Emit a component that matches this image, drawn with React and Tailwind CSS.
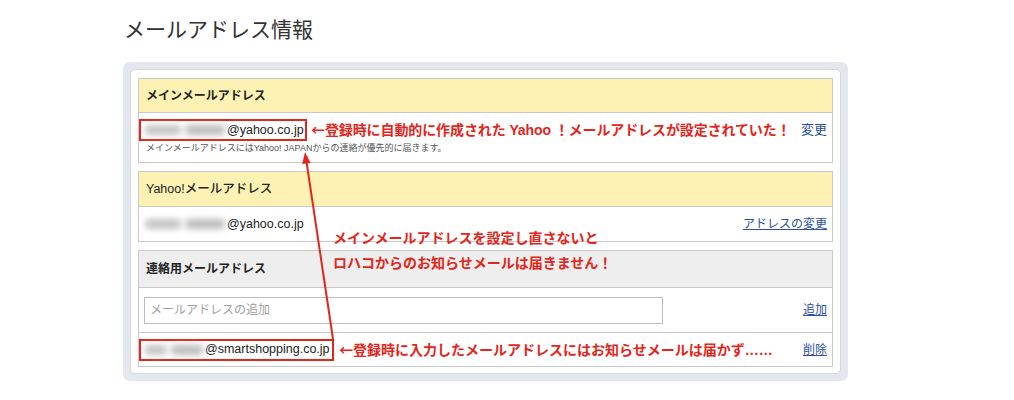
export default function App() {
  const font = { fontFamily: '"Liberation Sans", "Noto Sans CJK JP", sans-serif' };
  const cjk = { fontFamily: '"Noto Sans CJK JP", sans-serif' };
  const Blur = ({ w1 = 36, w2 = 40 }) => (
    <span className="inline-flex items-center gap-[4px] mr-[2px]">
      <span className="inline-block h-[10px] bg-[#c4c4c4] blur-[3px] rounded-sm" style={{ width: w1 }} />
      <span className="inline-block h-[10px] bg-[#bdbdbd] blur-[3px] rounded-sm" style={{ width: w2 }} />
    </span>
  );
  return (
    <div className="relative w-[1014px] h-[400px] bg-white overflow-hidden text-[#222]" style={font}>
      <div className="pt-[15px] pl-[124px] text-[21px] leading-[30px] text-[#333]">メールアドレス情報</div>

      <div className="mt-[17px] ml-[123px] w-[725px] rounded-[7px] bg-[#e4e7ed] p-[7px]">
        <div className="bg-white rounded-[5px] border border-[#d5d8dd] px-[7px] pt-[8px] pb-[6px]">
          {/* Section 1 */}
          <div className="border border-[#c9c9c9]">
            <div className="h-[34px] bg-[#fdf2b4] border-b border-[#c9c9c9] flex items-center pl-[7px] text-[12px] font-bold">
              メインメールアドレス
            </div>
            <div className="h-[49px] pt-[6px]">
              <div className="flex items-center h-[22px]">
                <div className="h-[22px] w-[168px] border-2 border-[#e3261b] flex items-center pl-[4px] text-[12.5px]">
                  <Blur />
                  <span>@yahoo.co.jp</span>
                </div>
                <span className="ml-[4px] text-[14px] font-bold text-[#e3261b] whitespace-nowrap tracking-[-0.1px]">
                  <span style={cjk}>←</span>登録時に自動的に作成された Yahoo ！メールアドレスが設定されていた！
                </span>
                <span className="ml-auto mr-[5px] text-[13px] text-[#2b4fa6] whitespace-nowrap">変更</span>
              </div>
              <div className="pl-[7px] text-[9px] leading-[12px] mt-[1px] text-[#555]">
                メインメールアドレスにはYahoo! JAPANからの連絡が優先的に届きます。
              </div>
            </div>
          </div>

          {/* Section 2 */}
          <div className="mt-[8px] border border-[#c9c9c9]">
            <div className="h-[35px] bg-[#fdf2b4] border-b border-[#c9c9c9] flex items-center pl-[7px] text-[12.5px] font-medium">
              Yahoo!メールアドレス
            </div>
            <div className="h-[34px] flex items-center pl-[6px] text-[12.5px]">
              <Blur />
              <span>@yahoo.co.jp</span>
              <span className="ml-auto mr-[5px] text-[12px] text-[#2b4fa6] underline">アドレスの変更</span>
            </div>
          </div>

          {/* Section 3 */}
          <div className="mt-[8px] border border-[#c9c9c9]">
            <div className="h-[37px] bg-[#eeeeee] border-b border-[#c9c9c9] flex items-center pl-[7px] text-[12px] font-bold">
              連絡用メールアドレス
            </div>
            <div className="h-[45px] border-b border-[#c9c9c9] flex items-center pl-[5px]">
              <div className="w-[519px] h-[27px] border border-[#bdbdbd] flex items-center pl-[5px] text-[12px] text-[#a0a0a0]">
                メールアドレスの追加
              </div>
              <span className="ml-auto mr-[5px] text-[12px] text-[#2b4fa6] underline">追加</span>
            </div>
            <div className="h-[33px] flex items-center">
              <div className="h-[22px] w-[195px] border-2 border-[#e3261b] flex items-center pl-[4px] text-[12.5px]">
                <Blur w1={22} w2={32} />
                <span>@smartshopping.co.jp</span>
              </div>
              <span className="ml-[5px] text-[14px] font-bold text-[#e3261b] whitespace-nowrap">
                <span style={cjk}>←</span>登録時に入力したメールアドレスにはお知らせメールは届かず……
              </span>
              <span className="ml-auto mr-[5px] text-[12px] text-[#2b4fa6] underline">削除</span>
            </div>
          </div>
        </div>
      </div>

      <div className="absolute left-[333px] top-[226px] text-[14px] leading-[25px] font-bold text-[#e3261b] whitespace-nowrap">
        <div>メインメールアドレスを設定し直さないと</div>
        <div>ロハコからのお知らせメールは届きません！</div>
      </div>

      <svg className="absolute inset-0 pointer-events-none" width="1014" height="400" viewBox="0 0 1014 400">
        <line x1="306.4" y1="161" x2="333" y2="339" stroke="#e3261b" strokeWidth="2" />
        <polygon points="305,152 310.6,163 302.2,164" fill="#e3261b" />
      </svg>
    </div>
  );
}
